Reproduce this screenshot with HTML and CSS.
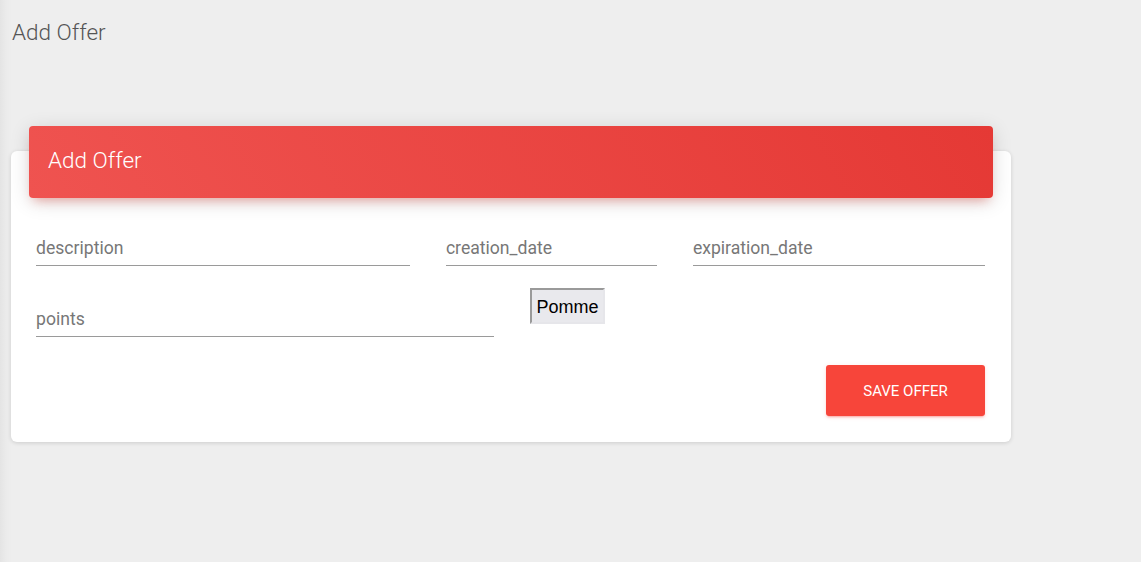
FILE: index.html
```html
<!DOCTYPE html>
<html>
<head>
<meta charset="utf-8">
<link rel="stylesheet" href="styles.css">
</head>
<body>
<div class="page">
  <div class="title">Add Offer</div>
  <div class="card">
    <div class="card-header">Add Offer</div>
    <div class="card-body">
      <div class="row row-1">
        <input class="field w-desc" type="text" placeholder="description">
        <input class="field w-create" type="text" placeholder="creation_date">
        <input class="field w-exp" type="text" placeholder="expiration_date">
      </div>
      <div class="row row-2">
        <input class="field w-points" type="text" placeholder="points">
        <button class="select-btn">Pomme</button>
      </div>
      <div class="actions">
        <button class="save">SAVE OFFER</button>
      </div>
    </div>
  </div>
</div>
</body>
</html>
```
FILE: styles.css
```css
html, body {
  margin: 0;
  height: 100%;
}
body {
  background: linear-gradient(to right, #e4e4e4 0px, #ebebeb 6px, #eeeeee 12px);
  font-family: Roboto, "Noto Sans", sans-serif;
  overflow: hidden;
}
.page {
  padding-left: 11px;
}
.title {
  padding-top: 21px;
  padding-left: 1px;
  height: 22px;
  line-height: 22px;
  font-size: 22.5px;
  font-weight: 300;
  color: #555555;
}
.card {
  margin-top: 108px;
  width: 1000px;
  background: #ffffff;
  border-radius: 6px;
  box-shadow: 0 1px 4px rgba(0, 0, 0, 0.14);
}
.card-header {
  position: relative;
  top: -25px;
  margin: 0 18px -25px 18px;
  height: 72px;
  padding-left: 19px;
  padding-bottom: 4px;
  display: flex;
  align-items: center;
  box-sizing: border-box;
  border-radius: 4px;
  background: linear-gradient(60deg, #ef5350, #e53935);
  box-shadow: 0 4px 20px 0 rgba(0, 0, 0, 0.14), 0 7px 10px -5px rgba(244, 67, 54, 0.4);
  color: #ffffff;
  font-size: 22.5px;
  font-weight: 300;
}
.card-body {
  padding: 32px 26px 26px 25px;
}
.row {
  display: flex;
  gap: 36px;
  align-items: flex-start;
}
.row-2 {
  margin-top: 22px;
}
.field {
  display: block;
  height: 36px;
  box-sizing: border-box;
  border: none;
  border-bottom: 1px solid #9a9a9a;
  padding: 1px 0 0 0;
  margin: 0;
  background: transparent;
  font-family: Roboto, sans-serif;
  font-size: 17.6px;
  color: #555;
  outline: none;
}
.field::placeholder {
  color: #777777;
}
.w-desc { width: 375px; }
.w-create { width: 211px; }
.w-exp { width: 293px; }
.w-points { width: 458px; margin-top: 13px; }
.select-btn {
  width: 75px;
  height: 36px;
  box-sizing: border-box;
  padding: 3px 0 0 0;
  margin: 0;
  background: #e9e9ed;
  border-style: solid;
  border-width: 2px;
  border-color: #9a9a9a #e6e6ea #e6e6ea #9a9a9a;
  font-family: "Liberation Sans", Arial, sans-serif;
  font-size: 18px;
  color: #000000;
}
.actions {
  display: flex;
  justify-content: flex-end;
  margin-top: 28px;
}
.save {
  width: 159px;
  height: 51px;
  border: none;
  border-radius: 3px;
  background: #f7453a;
  color: #ffffff;
  font-family: Roboto, sans-serif;
  font-size: 15px;
  font-weight: 400;
  box-shadow: 0 2px 2px 0 rgba(244, 67, 54, 0.14), 0 3px 1px -2px rgba(244, 67, 54, 0.2), 0 1px 5px 0 rgba(244, 67, 54, 0.12);
  padding: 0;
}
```
